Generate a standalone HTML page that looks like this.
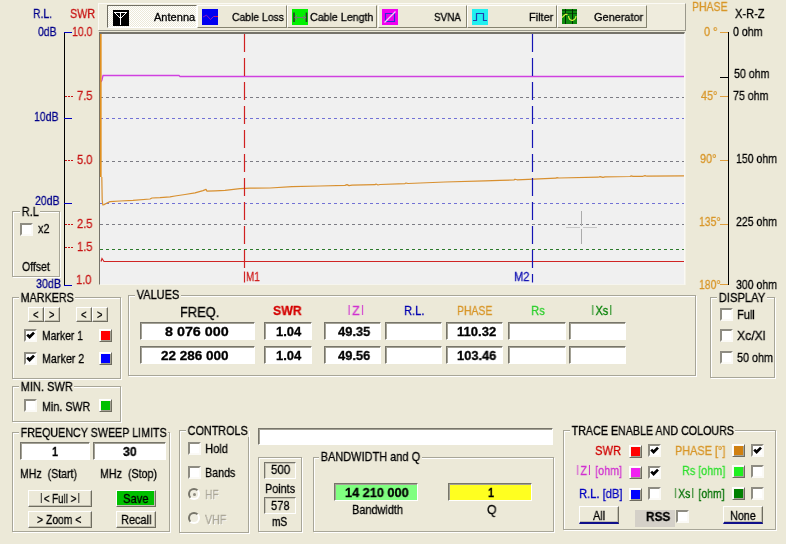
<!DOCTYPE html>
<html lang="en"><head><meta charset="utf-8"><title>Antenna Analyzer</title>
<style>
html,body{margin:0;padding:0}
body{width:786px;height:544px;overflow:hidden;position:relative;background:#ECE9D8;font-family:"Liberation Sans",sans-serif;font-size:13px;color:#000}
.ab{position:absolute;display:block}
.t{position:absolute;white-space:pre;line-height:1;transform-origin:0 0;will-change:transform;-webkit-text-stroke:0.3px}
.br{display:inline-block;font-weight:inherit;margin:0 1.5px;-webkit-text-stroke:0;transform:scaleY(.78);transform-origin:50% 13%}
.gb{position:absolute;border:1px solid #A8A698;box-shadow:1px 1px 0 #fff,inset 1px 1px 0 #fff}
.sk{position:absolute;border:1px solid;border-color:#77756A #fff #fff #77756A;box-shadow:inset 1px 1px 0 #A3A195}
.sk1{position:absolute;border:1px solid;border-color:#77756A #fff #fff #77756A;box-shadow:inset 1px 1px 0 #C9C6B8}
.btn{position:absolute;border:1px solid;border-color:#fff #6F6D60 #6F6D60 #fff;box-shadow:inset -1px -1px 0 #C2BFAF;background:#ECE9D8}
.cb{position:absolute;width:9px;height:9px;background:#fff;border:2px solid;border-color:#8E8C82 #FBFAF6 #FBFAF6 #8E8C82}
.cb svg{display:block}
.sw{position:absolute;width:11px;height:11px;border:1px solid;border-color:#fff #6F6D60 #6F6D60 #fff;box-shadow:inset 1px 1px 0 #FBFAF6,inset -1px -1px 0 #A5A395}
.rd{position:absolute;width:8px;height:8px;border-radius:50%;border:2px solid;border-color:#77756A #fff #fff #77756A;background:#EFEDE0}
.rd i{position:absolute;left:2.5px;top:2.5px;width:3px;height:3px;border-radius:50%;background:#8E8C80}
.toolbar{position:absolute;left:98px;top:3px;width:586px;height:26px;background:#EFECDD;border:1px solid;border-color:#FBFAF5 #9A988B #9A988B #FBFAF5}
.tb{position:absolute;border:1px solid;border-color:#fff #85836F #85836F #fff;background:#ECE9D8}
.tbp{position:absolute;border:1px solid;border-color:#716F64 #fff #fff #716F64;background:#F6F4EC repeating-conic-gradient(#fff 0% 25%,#ECE9D8 0% 50%) 0 0/2px 2px}
.chart{position:absolute;background:#F0F0F0;border:1px solid;border-top-width:2px;border-color:#75736A #FAF9F4 #F6F5EE #75736A;box-shadow:1px 0 0 #F3F1E6}
</style></head>
<body>
<div class="toolbar"></div>
<div class="tbp" style="left:107px;top:5px;width:88px;height:21px"></div>
<div class="tb" style="left:197px;top:5px;width:88px;height:21px"></div>
<div class="tb" style="left:287px;top:5px;width:88px;height:21px"></div>
<div class="tb" style="left:378px;top:5px;width:87px;height:21px"></div>
<div class="tb" style="left:467px;top:5px;width:88px;height:21px"></div>
<div class="tb" style="left:557px;top:5px;width:88px;height:21px"></div>

<svg class="ab" style="left:113px;top:10px" width="16" height="16" viewBox="0 0 16 16"><rect width="16" height="16" fill="#000"/><path d="M1 2.5H14M7.5 2.5V15M1.5 2.5L7.5 8.5L13.5 2.5" fill="none" stroke="#fff" stroke-width="1"/></svg>
<svg class="ab" style="left:202px;top:9px" width="16" height="16" viewBox="0 0 16 16"><rect width="16" height="16" fill="#0000F0"/><path d="M1 8L4.5 6.2L8.5 10.5L11.5 7.5H13" fill="none" stroke="#A020B0" stroke-width="0.9"/><path d="M13 7.5H16" fill="none" stroke="#E01040" stroke-width="1"/></svg>
<svg class="ab" style="left:292px;top:9px" width="16" height="16" viewBox="0 0 16 16"><rect width="16" height="16" fill="#00F000"/><path d="M2 3.5V13M14.5 3.5V13" fill="none" stroke="#204020" stroke-width="1.6"/><path d="M3 8.5H13.5M5 6.5L3 8.5L5 10.5M11.5 6.5L13.5 8.5L11.5 10.5" fill="none" stroke="#708070" stroke-width="1.1"/></svg>
<svg class="ab" style="left:382px;top:9px" width="16" height="16" viewBox="0 0 16 16"><rect width="16" height="16" fill="#F000F0"/><path d="M3.5 4.5H12.5V12.5H3.5Z" fill="none" stroke="#3030D0" stroke-width="1.2"/><path d="M2.5 13.5L13.5 2.5" fill="none" stroke="#F4D0F4" stroke-width="1.2"/></svg>
<svg class="ab" style="left:472px;top:9px" width="16" height="16" viewBox="0 0 16 16"><rect width="16" height="16" fill="#20F0F0"/><path d="M1 11.5H4.5V4.5H11.5V11.5H15" fill="none" stroke="#2040B0" stroke-width="1.2"/></svg>
<svg class="ab" style="left:562px;top:9px" width="15" height="15" viewBox="0 0 15 15"><rect width="15" height="15" fill="#0E8A0E"/><path d="M0 1.5H15M0 4.5H15" stroke="#065006" stroke-width="1" fill="none"/><path d="M3.5 0V15M10.5 0V15" stroke="#032C03" stroke-width="1" fill="none"/><path d="M0 8.5L3.5 5.3H5.5M6.5 7C7 10.5 9 11.5 10.5 11.3C12.5 11 13.8 9.5 14 7" fill="none" stroke="#D8F040" stroke-width="1.2"/></svg>

<div class="chart" style="left:99px;top:32px;width:584px;height:250px"></div>
<svg class="ab" style="left:0;top:0" width="786" height="300" viewBox="0 0 786 300">
<path d="M100 97.5H684" stroke="#7C7C84" stroke-width="1" stroke-dasharray="3 3"/>
<path d="M100 161.5H684" stroke="#7C7C84" stroke-width="1" stroke-dasharray="3 3"/>
<path d="M100 224.5H684" stroke="#7C7C84" stroke-width="1" stroke-dasharray="3 3"/>
<path d="M100 118.5H684" stroke="#7272D6" stroke-width="1" stroke-dasharray="3 3"/>
<path d="M100 203.5H684" stroke="#7272D6" stroke-width="1" stroke-dasharray="3 3"/>
<path d="M100 249.5H684" stroke="#2C7A2C" stroke-width="1" stroke-dasharray="3 3"/>
<path d="M101 261.5 L102 258.5 L104 261.5 H684" fill="none" stroke="#D02424" stroke-width="1.2"/>
<path d="M101 82 L102 80 L103 75.5 H179 L180 76.5 H684" fill="none" stroke="#D040E0" stroke-width="1.3"/>
<path d="M100.8 34 V177" fill="none" stroke="#E09020" stroke-width="1.7"/>
<path d="M101.8 177 L102.2 200 L102.8 205 L104 204.6 L107 203 L110 201.6 L120 201 L133 200.3 L150 199 L152 198 L160 197.6 L170 196.8 L175 196 L185 194.5 L195 192.8 L203 190.6 L206 189.4 L207 191.2 L215 190.8 L225 190.3 L240 188.6 L250 188.2 L270 188 L292 186.6 L320 186 L345 185.4 L347 184.6 L349 185.6 L352 185.2 L375 184.7 L376 184 L378 185 L380 184.5 L405 183.6 L406 183 L408 183.5 L445 182 L485 180.8 L500 180.3 L514 180 L515 179.2 L517 179.8 L556 178.2 L557 177.6 L559 178 L598 177.2 L600 176.6 L603 177.3 L605 176.8 L630 176.5 L631 175.9 L633 176.4 L643 176.3 L645 175.6 L647 176.2 L684 175.9" fill="none" stroke="#D89030" stroke-width="1.2" stroke-linejoin="round"/>
<path d="M244.5 34V268" stroke="#D02020" stroke-width="1.2" stroke-dasharray="18 6"/>
<path d="M244.5 271.5V282.5" stroke="#D02020" stroke-width="1.2"/>
<path d="M532.5 34V282.5" stroke="#1414B4" stroke-width="1.2" stroke-dasharray="18 6"/>
<path d="M581.5 211V226M581.5 229V244" stroke="#ABABAB" stroke-width="1"/>
<path d="M566 227.5H580M583 227.5H597" stroke="#C8C8C8" stroke-width="1"/>
<path d="M64.5 32V285" stroke="#000" stroke-width="1"/>
<path d="M64 32.5H72" stroke="#0000C0" stroke-width="1"/>
<path d="M64 118.5H72" stroke="#0000C0" stroke-width="1"/>
<path d="M64 203.5H72" stroke="#0000C0" stroke-width="1"/>
<path d="M64 285.5H72" stroke="#0000C0" stroke-width="1"/>
<path d="M65 96.5H73" stroke="#C81414" stroke-width="1" stroke-dasharray="2 1"/>
<path d="M65 160.5H73" stroke="#C81414" stroke-width="1" stroke-dasharray="2 1"/>
<path d="M65 224.5H73" stroke="#C81414" stroke-width="1" stroke-dasharray="2 1"/>
<path d="M65 247.5H73" stroke="#C81414" stroke-width="1" stroke-dasharray="2 1"/>
<path d="M728.5 32V285" stroke="#000" stroke-width="1"/>
<path d="M720 32.5H728" stroke="#E0A040" stroke-width="1"/>
<path d="M720 96.5H728" stroke="#E0A040" stroke-width="1"/>
<path d="M720 160.5H728" stroke="#E0A040" stroke-width="1"/>
<path d="M720 224.5H728" stroke="#E0A040" stroke-width="1"/>
<path d="M720 284.5H728" stroke="#E0A040" stroke-width="1"/>
<path d="M720 77.5H728" stroke="#000" stroke-width="1"/>
</svg>
<div class="gb" style="left:12px;top:211px;width:46px;height:64px"></div>
<div class="cb" style="left:20px;top:223px"></div>
<div class="gb" style="left:12px;top:297px;width:107px;height:80px"></div>
<div class="btn" style="left:28px;top:307px;width:14px;height:13px;"></div>
<div class="btn" style="left:44px;top:307px;width:14px;height:13px;"></div>
<div class="btn" style="left:76px;top:307px;width:14px;height:13px;"></div>
<div class="btn" style="left:92px;top:307px;width:14px;height:13px;"></div>
<div class="cb" style="left:24px;top:329px"><svg width="9" height="9" viewBox="0 0 9 9"><path d="M1.2 3.6 L3.6 6 L8 1.6" fill="none" stroke="#000" stroke-width="2.7"/></svg></div>
<div class="sw" style="left:99px;top:329px;background:#F00"></div>
<div class="cb" style="left:24px;top:352px"><svg width="9" height="9" viewBox="0 0 9 9"><path d="M1.2 3.6 L3.6 6 L8 1.6" fill="none" stroke="#000" stroke-width="2.7"/></svg></div>
<div class="sw" style="left:99px;top:352px;background:#00F"></div>
<div class="gb" style="left:12px;top:386px;width:107px;height:34px"></div>
<div class="cb" style="left:24px;top:399px"></div>
<div class="sw" style="left:99px;top:399px;background:#00C000"></div>
<div class="gb" style="left:128px;top:295px;width:566px;height:79px"></div>
<div class="sk" style="left:140px;top:322px;width:113px;height:16px;background:#fff"></div>
<div class="sk" style="left:140px;top:346px;width:113px;height:16px;background:#fff"></div>
<div class="sk" style="left:264px;top:322px;width:46px;height:16px;background:#fff"></div>
<div class="sk" style="left:264px;top:346px;width:46px;height:16px;background:#fff"></div>
<div class="sk" style="left:324px;top:322px;width:55px;height:16px;background:#fff"></div>
<div class="sk" style="left:324px;top:346px;width:55px;height:16px;background:#fff"></div>
<div class="sk" style="left:385px;top:322px;width:55px;height:16px;background:#fff"></div>
<div class="sk" style="left:385px;top:346px;width:55px;height:16px;background:#fff"></div>
<div class="sk" style="left:446px;top:322px;width:55px;height:16px;background:#fff"></div>
<div class="sk" style="left:446px;top:346px;width:55px;height:16px;background:#fff"></div>
<div class="sk" style="left:508px;top:322px;width:56px;height:16px;background:#fff"></div>
<div class="sk" style="left:508px;top:346px;width:56px;height:16px;background:#fff"></div>
<div class="sk" style="left:569px;top:322px;width:55px;height:16px;background:#fff"></div>
<div class="sk" style="left:569px;top:346px;width:55px;height:16px;background:#fff"></div>
<div class="gb" style="left:710px;top:297px;width:63px;height:79px"></div>
<div class="cb" style="left:720px;top:308px"></div>
<div class="cb" style="left:720px;top:329px"></div>
<div class="cb" style="left:720px;top:351px"></div>
<div class="gb" style="left:12px;top:432px;width:156px;height:98px"></div>
<div class="sk" style="left:20px;top:442px;width:68px;height:16px;background:#fff"></div>
<div class="sk" style="left:93px;top:442px;width:71px;height:16px;background:#fff"></div>
<div class="btn" style="left:28px;top:490px;width:62px;height:15px;"></div>
<div class="btn" style="left:28px;top:511px;width:62px;height:15px;"></div>
<div class="btn" style="left:116px;top:490px;width:38px;height:15px;background:#00C000;"></div>
<div class="btn" style="left:116px;top:511px;width:38px;height:15px;"></div>
<div class="gb" style="left:179px;top:430px;width:68px;height:101px"></div>
<div class="cb" style="left:188px;top:442px"></div>
<div class="cb" style="left:188px;top:466px"></div>
<div class="rd" style="left:188px;top:488px"><i></i></div>
<div class="rd" style="left:188px;top:512px"></div>
<div class="sk" style="left:258px;top:428px;width:293px;height:15px;background:#fff"></div>
<div class="gb" style="left:258px;top:457px;width:42px;height:73px"></div>
<div class="sk1" style="left:264px;top:462px;width:30px;height:15px;background:#ECE9D8"></div>
<div class="sk1" style="left:264px;top:497px;width:30px;height:15px;background:#ECE9D8"></div>
<div class="gb" style="left:313px;top:457px;width:239px;height:73px"></div>
<div class="sk" style="left:334px;top:483px;width:82px;height:16px;background:#80FF80"></div>
<div class="sk" style="left:448px;top:483px;width:82px;height:16px;background:#FFFF20"></div>
<div class="gb" style="left:563px;top:430px;width:211px;height:98px"></div>
<div class="sw" style="left:629px;top:445px;background:#F00"></div>
<div class="cb" style="left:648px;top:444px"><svg width="9" height="9" viewBox="0 0 9 9"><path d="M1.2 3.6 L3.6 6 L8 1.6" fill="none" stroke="#000" stroke-width="2.7"/></svg></div>
<div class="sw" style="left:732px;top:444px;background:#D08010"></div>
<div class="cb" style="left:751px;top:444px"><svg width="9" height="9" viewBox="0 0 9 9"><path d="M1.2 3.6 L3.6 6 L8 1.6" fill="none" stroke="#000" stroke-width="2.7"/></svg></div>
<div class="sw" style="left:629px;top:466px;background:#F020F0"></div>
<div class="cb" style="left:648px;top:466px"><svg width="9" height="9" viewBox="0 0 9 9"><path d="M1.2 3.6 L3.6 6 L8 1.6" fill="none" stroke="#000" stroke-width="2.7"/></svg></div>
<div class="sw" style="left:732px;top:465px;background:#20F020"></div>
<div class="cb" style="left:751px;top:465px"></div>
<div class="sw" style="left:629px;top:488px;background:#00F"></div>
<div class="cb" style="left:648px;top:487px"></div>
<div class="sw" style="left:732px;top:487px;background:#008000"></div>
<div class="cb" style="left:751px;top:487px"></div>
<div class="btn" style="left:579px;top:506px;width:38px;height:16px;border-bottom:2px solid #10108A;height:15px;"></div>
<div style="position:absolute;left:635px;top:510px;width:40px;height:17px;background:#D4D0C8"></div>
<div class="cb" style="left:676px;top:510px"></div>
<div class="btn" style="left:723px;top:506px;width:38px;height:16px;border-bottom:2px solid #10108A;height:15px;"></div>
<span class="t" style="left:32.5px;top:7.0px;color:#00008B;transform:scaleX(0.797);">R.L.</span>
<span class="t" style="left:69.5px;top:7.0px;color:#C81414;transform:scaleX(0.824);">SWR</span>
<span class="t" style="left:38.0px;top:25.0px;color:#00008B;transform:scaleX(0.799);">0dB</span>
<span class="t" style="left:72.0px;top:25.0px;color:#C81414;transform:scaleX(0.810);">10.0</span>
<span class="t" style="left:76.5px;top:89.0px;color:#C81414;transform:scaleX(0.857);">7.5</span>
<span class="t" style="left:34.0px;top:110.0px;color:#00008B;transform:scaleX(0.807);">10dB</span>
<span class="t" style="left:76.5px;top:153.0px;color:#C81414;transform:scaleX(0.857);">5.0</span>
<span class="t" style="left:34.5px;top:194.0px;color:#00008B;transform:scaleX(0.807);">20dB</span>
<span class="t" style="left:76.5px;top:217.0px;color:#C81414;transform:scaleX(0.857);">2.5</span>
<span class="t" style="left:76.5px;top:240.0px;color:#C81414;transform:scaleX(0.857);">1.5</span>
<span class="t" style="left:76.0px;top:273.0px;color:#C81414;transform:scaleX(0.857);">1.0</span>
<span class="t" style="left:36.0px;top:277.0px;color:#00008B;transform:scaleX(0.823);">30dB</span>
<span class="t" style="left:692.0px;top:0.0px;color:#D89628;transform:scaleX(0.805);">PHASE</span>
<span class="t" style="left:735.0px;top:7.0px;color:#000;transform:scaleX(0.851);">X-R-Z</span>
<span class="t" style="left:704.0px;top:25.0px;color:#D89628;transform:scaleX(0.841);">0 °</span>
<span class="t" style="left:732.5px;top:25.0px;color:#000;transform:scaleX(0.816);">0 ohm</span>
<span class="t" style="left:734.0px;top:67.0px;color:#000;transform:scaleX(0.818);">50 ohm</span>
<span class="t" style="left:700.5px;top:89.0px;color:#D89628;transform:scaleX(0.829);">45°</span>
<span class="t" style="left:733.0px;top:89.0px;color:#000;transform:scaleX(0.818);">75 ohm</span>
<span class="t" style="left:700.1px;top:152.0px;color:#D89628;transform:scaleX(0.834);">90°</span>
<span class="t" style="left:735.5px;top:152.0px;color:#000;transform:scaleX(0.810);">150 ohm</span>
<span class="t" style="left:698.5px;top:215.0px;color:#D89628;transform:scaleX(0.800);">135°</span>
<span class="t" style="left:735.5px;top:215.0px;color:#000;transform:scaleX(0.810);">225 ohm</span>
<span class="t" style="left:698.5px;top:278.0px;color:#D89628;transform:scaleX(0.800);">180°</span>
<span class="t" style="left:735.5px;top:278.0px;color:#000;transform:scaleX(0.810);">300 ohm</span>
<span class="t" style="left:19.5px;top:205.0px;color:#000;background:#ECE9D8;padding:0 2px;transform:scaleX(0.846);">R.L</span>
<span class="t" style="left:38.0px;top:222.0px;color:#000;transform:scaleX(0.837);">x2</span>
<span class="t" style="left:22.2px;top:260.0px;color:#000;transform:scaleX(0.810);">Offset</span>
<span class="t" style="left:19.0px;top:291.0px;color:#000;background:#ECE9D8;padding:0 2px;transform:scaleX(0.827);">MARKERS</span>
<span class="t" style="left:33.2px;top:308.0px;color:#000;transform:scaleX(0.751);">&lt;</span>
<span class="t" style="left:49.4px;top:308.0px;color:#000;transform:scaleX(0.724);">&gt;</span>
<span class="t" style="left:81.2px;top:308.0px;color:#000;transform:scaleX(0.751);">&lt;</span>
<span class="t" style="left:97.4px;top:308.0px;color:#000;transform:scaleX(0.724);">&gt;</span>
<span class="t" style="left:42.2px;top:329.0px;color:#000;transform:scaleX(0.799);">Marker 1</span>
<span class="t" style="left:42.2px;top:352.0px;color:#000;transform:scaleX(0.825);">Marker 2</span>
<span class="t" style="left:19.0px;top:380.0px;color:#000;background:#ECE9D8;padding:0 2px;transform:scaleX(0.849);">MIN. SWR</span>
<span class="t" style="left:42.2px;top:400.0px;color:#000;transform:scaleX(0.826);">Min. SWR</span>
<span class="t" style="left:134.8px;top:288.0px;color:#000;background:#ECE9D8;padding:0 2px;transform:scaleX(0.846);">VALUES</span>
<span class="t" style="left:180.3px;top:305.0px;color:#000;font-size:14px;transform:scaleX(0.916);">FREQ.</span>
<span class="t" style="left:273.2px;top:304.0px;color:#D40000;font-weight:bold;transform:scaleX(0.943);">SWR</span>
<span class="t" style="left:345.5px;top:304.0px;color:#D030D0;transform:scaleX(0.950);"><b class="br">|</b>Z<b class="br">|</b></span>
<span class="t" style="left:403.8px;top:304.0px;color:#0000B0;transform:scaleX(0.856);">R.L.</span>
<span class="t" style="left:457.2px;top:304.0px;color:#D89628;transform:scaleX(0.801);">PHASE</span>
<span class="t" style="left:530.8px;top:304.0px;color:#30D030;transform:scaleX(0.862);">Rs</span>
<span class="t" style="left:590.2px;top:304.0px;color:#008000;transform:scaleX(0.844);"><b class="br">|</b>Xs<b class="br">|</b></span>
<span class="t" style="left:165.1px;top:325.0px;color:#000;font-weight:bold;transform:scaleX(1.101);">8 076 000</span>
<span class="t" style="left:161.2px;top:349.0px;color:#000;font-weight:bold;transform:scaleX(1.039);">22 286 000</span>
<span class="t" style="left:275.5px;top:325.0px;color:#000;font-weight:bold;transform:scaleX(1.000);">1.04</span>
<span class="t" style="left:275.5px;top:349.0px;color:#000;font-weight:bold;transform:scaleX(1.000);">1.04</span>
<span class="t" style="left:337.5px;top:325.0px;color:#000;font-weight:bold;transform:scaleX(0.992);">49.35</span>
<span class="t" style="left:337.5px;top:349.0px;color:#000;font-weight:bold;transform:scaleX(0.992);">49.56</span>
<span class="t" style="left:456.5px;top:325.0px;color:#000;font-weight:bold;transform:scaleX(1.006);">110.32</span>
<span class="t" style="left:456.5px;top:349.0px;color:#000;font-weight:bold;transform:scaleX(0.988);">103.46</span>
<span class="t" style="left:716.5px;top:291.0px;color:#000;background:#ECE9D8;padding:0 2px;transform:scaleX(0.863);">DISPLAY</span>
<span class="t" style="left:736.8px;top:308.0px;color:#000;transform:scaleX(0.845);">Full</span>
<span class="t" style="left:736.8px;top:329.0px;color:#000;transform:scaleX(0.936);">Xc/Xl</span>
<span class="t" style="left:736.8px;top:351.0px;color:#000;transform:scaleX(0.830);">50 ohm</span>
<span class="t" style="left:19.2px;top:426.0px;color:#000;background:#ECE9D8;padding:0 2px;transform:scaleX(0.824);">FREQUENCY SWEEP LIMITS</span>
<span class="t" style="left:52.0px;top:445.0px;color:#000;font-weight:bold;transform:scaleX(0.829);">1</span>
<span class="t" style="left:122.8px;top:445.0px;color:#000;font-weight:bold;transform:scaleX(0.947);">30</span>
<span class="t" style="left:20.2px;top:467.0px;color:#000;transform:scaleX(0.814);">MHz  (Start)</span>
<span class="t" style="left:100.2px;top:467.0px;color:#000;transform:scaleX(0.822);">MHz  (Stop)</span>
<span class="t" style="left:38.9px;top:492.0px;color:#000;transform:scaleX(0.750);"><b class="br">|</b>&lt; Full &gt;<b class="br">|</b></span>
<span class="t" style="left:37.3px;top:513.0px;color:#000;transform:scaleX(0.798);">&gt; Zoom &lt;</span>
<span class="t" style="left:123.4px;top:492.0px;color:#000;transform:scaleX(0.857);">Save</span>
<span class="t" style="left:121.4px;top:513.0px;color:#000;transform:scaleX(0.844);">Recall</span>
<span class="t" style="left:185.8px;top:424.0px;color:#000;background:#ECE9D8;padding:0 2px;transform:scaleX(0.832);">CONTROLS</span>
<span class="t" style="left:205.2px;top:442.0px;color:#000;transform:scaleX(0.860);">Hold</span>
<span class="t" style="left:205.2px;top:466.0px;color:#000;transform:scaleX(0.822);">Bands</span>
<span class="t" style="left:205.2px;top:488.0px;color:#ACA899;text-shadow:1px 1px 0 #fff;transform:scaleX(0.784);">HF</span>
<span class="t" style="left:205.2px;top:513.0px;color:#ACA899;text-shadow:1px 1px 0 #fff;transform:scaleX(0.819);">VHF</span>
<span class="t" style="left:271.0px;top:463.0px;color:#000;transform:scaleX(0.885);">500</span>
<span class="t" style="left:264.7px;top:482.0px;color:#000;transform:scaleX(0.830);">Points</span>
<span class="t" style="left:270.9px;top:499.0px;color:#000;transform:scaleX(0.857);">578</span>
<span class="t" style="left:272.1px;top:515.0px;color:#000;transform:scaleX(0.779);">mS</span>
<span class="t" style="left:318.9px;top:450.0px;color:#000;background:#ECE9D8;padding:0 2px;transform:scaleX(0.844);">BANDWIDTH and Q</span>
<span class="t" style="left:344.5px;top:486.0px;color:#000;font-weight:bold;transform:scaleX(0.980);">14 210 000</span>
<span class="t" style="left:351.5px;top:503.0px;color:#000;transform:scaleX(0.840);">Bandwidth</span>
<span class="t" style="left:487.5px;top:486.0px;color:#000;font-weight:bold;transform:scaleX(0.829);">1</span>
<span class="t" style="left:486.5px;top:503.0px;color:#000;transform:scaleX(0.938);">Q</span>
<span class="t" style="left:570.0px;top:424.0px;color:#000;background:#ECE9D8;padding:0 2px;transform:scaleX(0.823);">TRACE ENABLE AND COLOURS</span>
<span class="t" style="left:595.1px;top:444.0px;color:#D00000;transform:scaleX(0.857);">SWR</span>
<span class="t" style="left:675.0px;top:444.0px;color:#D89628;transform:scaleX(0.837);">PHASE [°]</span>
<span class="t" style="left:575.0px;top:464.0px;color:#D030D0;transform:scaleX(0.827);"><b class="br">|</b>Z<b class="br">|</b> [ohm]</span>
<span class="t" style="left:681.5px;top:464.0px;color:#30E030;transform:scaleX(0.831);">Rs [ohm]</span>
<span class="t" style="left:578.5px;top:487.0px;color:#0000C0;transform:scaleX(0.860);">R.L. [dB]</span>
<span class="t" style="left:673.2px;top:487.0px;color:#007000;transform:scaleX(0.804);"><b class="br">|</b>Xs<b class="br">|</b> [ohm]</span>
<span class="t" style="left:593.0px;top:509.0px;color:#000;transform:scaleX(0.844);">All</span>
<span class="t" style="left:646.2px;top:510.0px;color:#000;font-weight:bold;transform:scaleX(0.909);">RSS</span>
<span class="t" style="left:730.3px;top:509.0px;color:#000;transform:scaleX(0.833);">None</span>
<span class="t" style="left:153.5px;top:12.0px;color:#000;font-size:11px;transform:scaleX(1.005);">Antenna</span>
<span class="t" style="left:231.9px;top:12.0px;color:#000;font-size:11px;transform:scaleX(0.943);">Cable Loss</span>
<span class="t" style="left:309.9px;top:12.0px;color:#000;font-size:11px;transform:scaleX(0.969);">Cable Length</span>
<span class="t" style="left:434.1px;top:12.0px;color:#000;font-size:11px;transform:scaleX(0.901);">SVNA</span>
<span class="t" style="left:529.1px;top:12.0px;color:#000;font-size:11px;transform:scaleX(0.990);">Filter</span>
<span class="t" style="left:594.3px;top:12.0px;color:#000;font-size:11px;transform:scaleX(0.993);">Generator</span>
<span class="t" style="left:246.2px;top:270.0px;color:#D02020;transform:scaleX(0.764);">M1</span>
<span class="t" style="left:514.3px;top:270.0px;color:#1414B4;transform:scaleX(0.858);">M2</span>
</body></html>
